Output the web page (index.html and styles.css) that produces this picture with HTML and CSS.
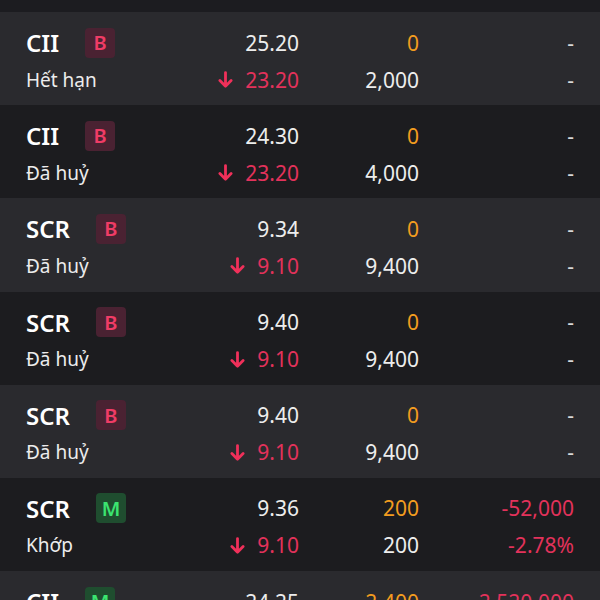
FILE: index.html
```html
<!DOCTYPE html>
<html>
<head>
  <link rel="stylesheet" href="styles.css">
</head>
<body>
  <div class="orders">
    <div class="top-strip"></div>

    <!-- CII buy, expired -->
    <div class="order light">
      <div class="ticker">CII <span class="side buy">B</span></div>
      <div class="num">25.20</div>
      <div class="num orange">0</div>
      <div class="num dim">-</div>
      <div class="status">Hết hạn</div>
      <div class="num red"><svg class="arrow" viewBox="0 0 15 17"><path d="M7.5 1.6V15.2M1.9 9.6L7.5 15.2L13.1 9.6"/></svg>23.20</div>
      <div class="num">2,000</div>
      <div class="num dim">-</div>
    </div>

    <div class="order dark">
      <div class="ticker">CII <span class="side buy">B</span></div>
      <div class="num">24.30</div>
      <div class="num orange">0</div>
      <div class="num dim">-</div>
      <div class="status">Đã huỷ</div>
      <div class="num red"><svg class="arrow" viewBox="0 0 15 17"><path d="M7.5 1.6V15.2M1.9 9.6L7.5 15.2L13.1 9.6"/></svg>23.20</div>
      <div class="num">4,000</div>
      <div class="num dim">-</div>
    </div>

    <div class="order light">
      <div class="ticker">SCR <span class="side buy">B</span></div>
      <div class="num">9.34</div>
      <div class="num orange">0</div>
      <div class="num dim">-</div>
      <div class="status">Đã huỷ</div>
      <div class="num red"><svg class="arrow" viewBox="0 0 15 17"><path d="M7.5 1.6V15.2M1.9 9.6L7.5 15.2L13.1 9.6"/></svg>9.10</div>
      <div class="num">9,400</div>
      <div class="num dim">-</div>
    </div>

    <div class="order dark">
      <div class="ticker">SCR <span class="side buy">B</span></div>
      <div class="num">9.40</div>
      <div class="num orange">0</div>
      <div class="num dim">-</div>
      <div class="status">Đã huỷ</div>
      <div class="num red"><svg class="arrow" viewBox="0 0 15 17"><path d="M7.5 1.6V15.2M1.9 9.6L7.5 15.2L13.1 9.6"/></svg>9.10</div>
      <div class="num">9,400</div>
      <div class="num dim">-</div>
    </div>

    <div class="order light">
      <div class="ticker">SCR <span class="side buy">B</span></div>
      <div class="num">9.40</div>
      <div class="num orange">0</div>
      <div class="num dim">-</div>
      <div class="status">Đã huỷ</div>
      <div class="num red"><svg class="arrow" viewBox="0 0 15 17"><path d="M7.5 1.6V15.2M1.9 9.6L7.5 15.2L13.1 9.6"/></svg>9.10</div>
      <div class="num">9,400</div>
      <div class="num dim">-</div>
    </div>

    <!-- matched -->
    <div class="order dark">
      <div class="ticker">SCR <span class="side match">M</span></div>
      <div class="num">9.36</div>
      <div class="num orange">200</div>
      <div class="num red">-52,000</div>
      <div class="status">Khớp</div>
      <div class="num red"><svg class="arrow" viewBox="0 0 15 17"><path d="M7.5 1.6V15.2M1.9 9.6L7.5 15.2L13.1 9.6"/></svg>9.10</div>
      <div class="num">200</div>
      <div class="num red">-2.78%</div>
    </div>

    <div class="order light">
      <div class="ticker">CII <span class="side match">M</span></div>
      <div class="num">24.25</div>
      <div class="num orange">2,400</div>
      <div class="num red">-2,520,000</div>
      <div class="status">Khớp</div>
      <div class="num red"><svg class="arrow" viewBox="0 0 15 17"><path d="M7.5 1.6V15.2M1.9 9.6L7.5 15.2L13.1 9.6"/></svg>23.20</div>
      <div class="num">2,400</div>
      <div class="num red">-4.33%</div>
    </div>
  </div>
</body>
</html>
```

FILE: styles.css
```css
body {
  margin: 0;
  background-color: #1c1c1f;
  font-family: "Noto Sans", "Open Sans", sans-serif;
  color: #f2f2f2;
  overflow: hidden;
}

.orders {
  display: flex;
  flex-direction: column;
}

.top-strip {
  height: 12px;
  background-color: #1c1c20;
}

.order {
  display: grid;
  grid-template-columns: 1fr 130px 120px 155px;
  grid-auto-rows: 37px;
  align-items: center;
  height: 93.2px;
  box-sizing: border-box;
  padding: 12px 26px 0 26px;
}

.order.light {
  background-color: #2a2a2e;
}

.order.dark {
  background-color: #1c1c1f;
}

.ticker {
  display: flex;
  align-items: center;
  gap: 26px;
  font-size: 24px;
  font-weight: 600;
  color: #ffffff;
}

.side {
  display: flex;
  align-items: center;
  justify-content: center;
  width: 30px;
  height: 30px;
  border-radius: 4px;
  font-size: 20px;
  font-weight: 600;
}

.side.buy {
  background-color: #4a2232;
  color: #f03c66;
}

.side.match {
  background-color: #1f4d2f;
  color: #3be470;
}

.status {
  font-size: 19px;
  color: #ececec;
}

.num {
  display: flex;
  align-items: center;
  justify-content: flex-end;
  font-size: 21px;
  color: #ededed;
}

.num.orange {
  color: #f39c1f;
}

.num.red {
  color: #e3325b;
}

.num.dim {
  color: #d8d8d8;
}

.arrow {
  width: 15px;
  height: 17px;
  margin-right: 12px;
  fill: none;
  stroke: #f0305a;
  stroke-width: 2.8;
  stroke-linecap: round;
  stroke-linejoin: round;
}
```
